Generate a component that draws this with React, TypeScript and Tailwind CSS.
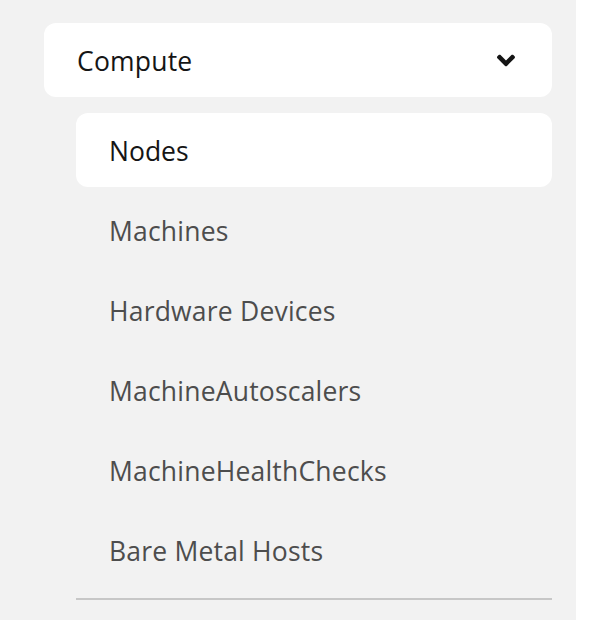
import React from "react";

const items = [
  "Machines",
  "Hardware Devices",
  "MachineAutoscalers",
  "MachineHealthChecks",
  "Bare Metal Hosts",
];

export default function App() {
  return (
    <div
      className="w-[610px] h-[620px] bg-white flex overflow-hidden"
      style={{ fontFamily: '"Open Sans", "Liberation Sans", sans-serif' }}
    >
      <div className="w-[576px] h-full bg-[#f2f2f2] pt-[23px] pl-[44px] pr-[24px]">
        <button className="w-full h-[74px] bg-white rounded-[12px] flex items-center justify-between pl-[33px] pr-[37px] text-[26.5px] tracking-[0.2px] text-[#151515]">
          <span className="pt-[3px]">Compute</span>
          <svg width="18" height="13" viewBox="0 150 320 212" fill="#151515">
            <path d="M143 352.3L7 216.3c-9.4-9.4-9.4-24.6 0-33.9l22.6-22.6c9.4-9.4 24.6-9.4 33.9 0l96.4 96.4 96.4-96.4c9.4-9.4 24.6-9.4 33.9 0l22.6 22.6c9.4 9.4 9.4 24.6 0 33.9l-136 136c-9.2 9.4-24.4 9.4-33.8 0z" />
          </svg>
        </button>
        <div className="ml-[32px] mt-[16px] flex flex-col gap-[6px]">
          <div className="h-[74px] bg-white rounded-[12px] flex items-center pl-[33px] pt-[3px] text-[26.5px] text-[#151515]">
            Nodes
          </div>
          {items.map((t) => (
            <div
              key={t}
              className="h-[74px] flex items-center pl-[33px] pt-[3px] text-[26.5px] tracking-[0.2px] text-[#4d4d4d]"
            >
              {t}
            </div>
          ))}
        </div>
        <div className="ml-[32px] mt-[11px] h-[2px] bg-[#c7c7c7]" />
      </div>
    </div>
  );
}
